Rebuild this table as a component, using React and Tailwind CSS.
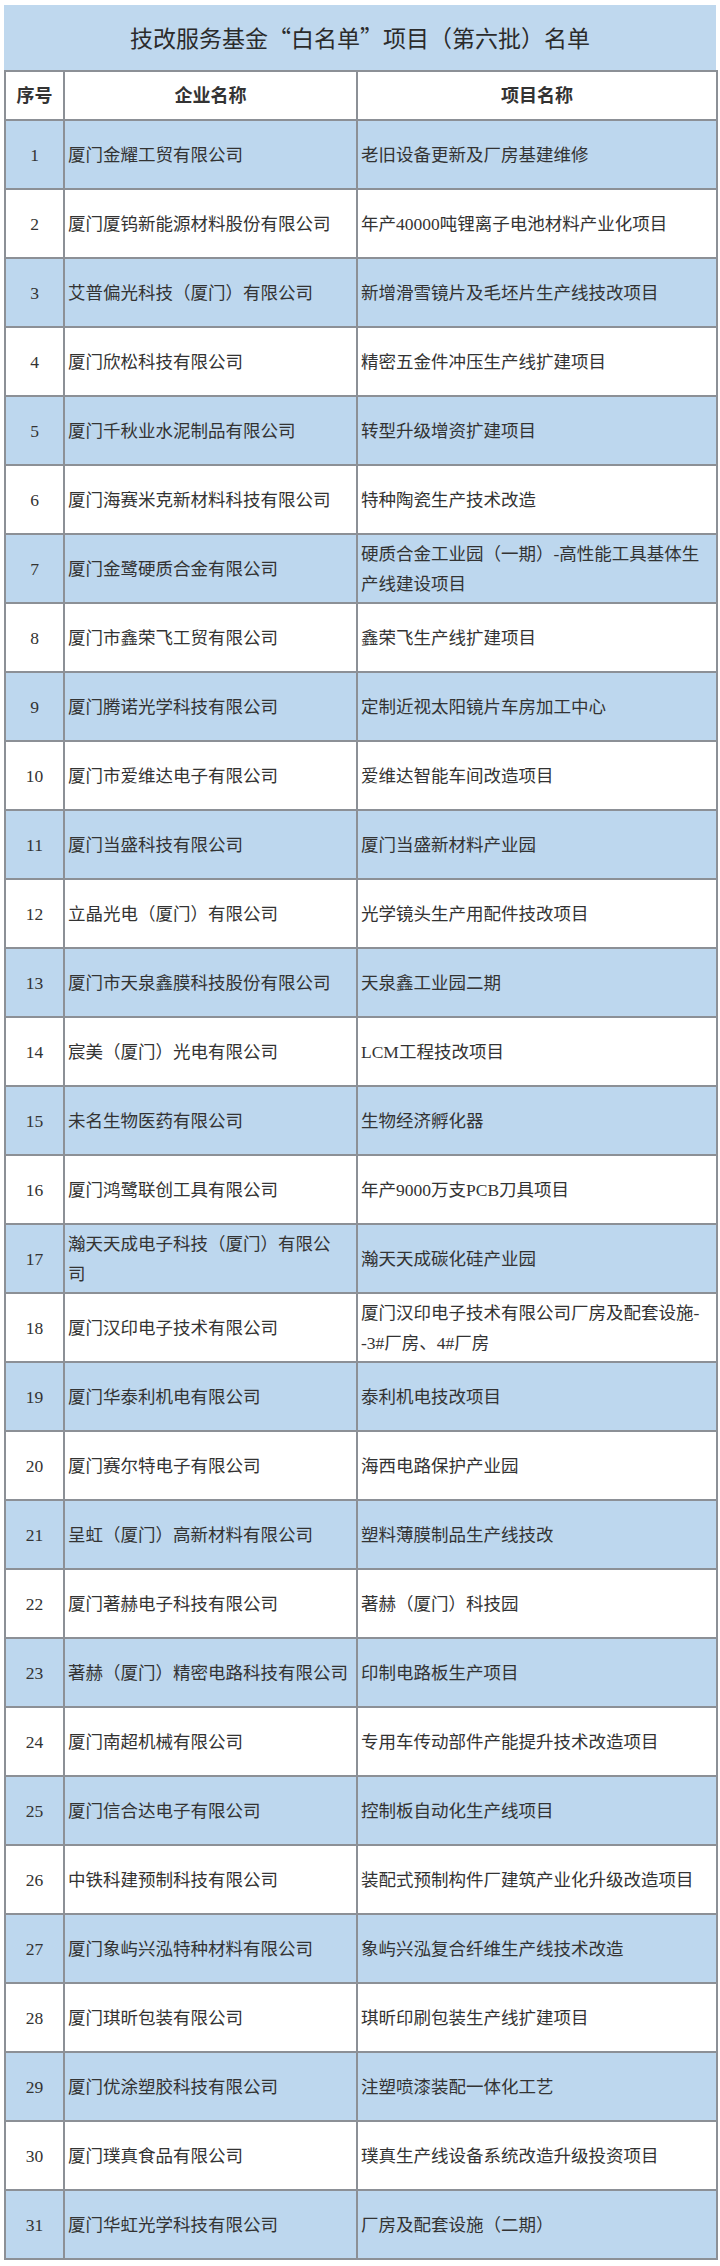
import React from "react";

const rows = [
  ["厦门金耀工贸有限公司", "老旧设备更新及厂房基建维修"],
  ["厦门厦钨新能源材料股份有限公司", "年产40000吨锂离子电池材料产业化项目"],
  ["艾普偏光科技（厦门）有限公司", "新增滑雪镜片及毛坯片生产线技改项目"],
  ["厦门欣松科技有限公司", "精密五金件冲压生产线扩建项目"],
  ["厦门千秋业水泥制品有限公司", "转型升级增资扩建项目"],
  ["厦门海赛米克新材料科技有限公司", "特种陶瓷生产技术改造"],
  ["厦门金鹭硬质合金有限公司", ["硬质合金工业园（一期）-高性能工具基体生", "产线建设项目"]],
  ["厦门市鑫荣飞工贸有限公司", "鑫荣飞生产线扩建项目"],
  ["厦门腾诺光学科技有限公司", "定制近视太阳镜片车房加工中心"],
  ["厦门市爱维达电子有限公司", "爱维达智能车间改造项目"],
  ["厦门当盛科技有限公司", "厦门当盛新材料产业园"],
  ["立晶光电（厦门）有限公司", "光学镜头生产用配件技改项目"],
  ["厦门市天泉鑫膜科技股份有限公司", "天泉鑫工业园二期"],
  ["宸美（厦门）光电有限公司", "LCM工程技改项目"],
  ["未名生物医药有限公司", "生物经济孵化器"],
  ["厦门鸿鹭联创工具有限公司", "年产9000万支PCB刀具项目"],
  [["瀚天天成电子科技（厦门）有限公", "司"], "瀚天天成碳化硅产业园"],
  ["厦门汉印电子技术有限公司", ["厦门汉印电子技术有限公司厂房及配套设施-", "-3#厂房、4#厂房"]],
  ["厦门华泰利机电有限公司", "泰利机电技改项目"],
  ["厦门赛尔特电子有限公司", "海西电路保护产业园"],
  ["呈虹（厦门）高新材料有限公司", "塑料薄膜制品生产线技改"],
  ["厦门著赫电子科技有限公司", "著赫（厦门）科技园"],
  ["著赫（厦门）精密电路科技有限公司", "印制电路板生产项目"],
  ["厦门南超机械有限公司", "专用车传动部件产能提升技术改造项目"],
  ["厦门信合达电子有限公司", "控制板自动化生产线项目"],
  ["中铁科建预制科技有限公司", "装配式预制构件厂建筑产业化升级改造项目"],
  ["厦门象屿兴泓特种材料有限公司", "象屿兴泓复合纤维生产线技术改造"],
  ["厦门琪昕包装有限公司", "琪昕印刷包装生产线扩建项目"],
  ["厦门优涂塑胶科技有限公司", "注塑喷漆装配一体化工艺"],
  ["厦门璞真食品有限公司", "璞真生产线设备系统改造升级投资项目"],
  ["厦门华虹光学科技有限公司", "厂房及配套设施（二期）"],
];

function Lines({ value }) {
  if (Array.isArray(value)) {
    return value.map((line, i) => (
      <span key={i} className="block">
        {line}
      </span>
    ));
  }
  return value;
}

export default function App() {
  return (
    <div
      className="w-[720px] bg-white pt-[5px] pl-[4px] text-[#333]"
      style={{ fontFamily: '"Liberation Serif", "Noto Sans CJK SC", serif' }}
    >
      <div className="w-[712px]">
        {/* Title */}
        <div
          className="h-[65px] bg-[#bfd8ee] flex items-center justify-center text-[23px] text-[#2b2b2b]"
          style={{ fontFamily: '"Noto Sans CJK SC", sans-serif' }}
        >
          技改服务基金“白名单”项目（第六批）名单
        </div>

        <table className="w-[712px] table-fixed border-collapse text-[17.5px] leading-[30px]">
          <colgroup>
            <col className="w-[59px]" />
            <col className="w-[293px]" />
            <col className="w-[360px]" />
          </colgroup>
          <thead>
            <tr className="h-[49px] bg-white text-[18px]">
              <th className="border-2 border-[#8c9096] text-center font-bold">序号</th>
              <th className="border-2 border-[#8c9096] text-center font-bold">企业名称</th>
              <th className="border-2 border-[#8c9096] text-center font-bold">项目名称</th>
            </tr>
          </thead>
          <tbody>
            {rows.map(([company, project], i) => (
              <tr key={i} className={i % 2 === 0 ? "h-[69px] bg-[#bdd7ee]" : "h-[69px] bg-white"}>
                <td className="border-2 border-[#8c9096] text-center align-middle">{i + 1}</td>
                <td className="border-2 border-[#8c9096] pl-[3px] pr-[6px] align-middle">
                  <Lines value={company} />
                </td>
                <td className="border-2 border-[#8c9096] pl-[3px] pr-[4px] align-middle whitespace-nowrap">
                  <Lines value={project} />
                </td>
              </tr>
            ))}
          </tbody>
        </table>
      </div>
    </div>
  );
}
